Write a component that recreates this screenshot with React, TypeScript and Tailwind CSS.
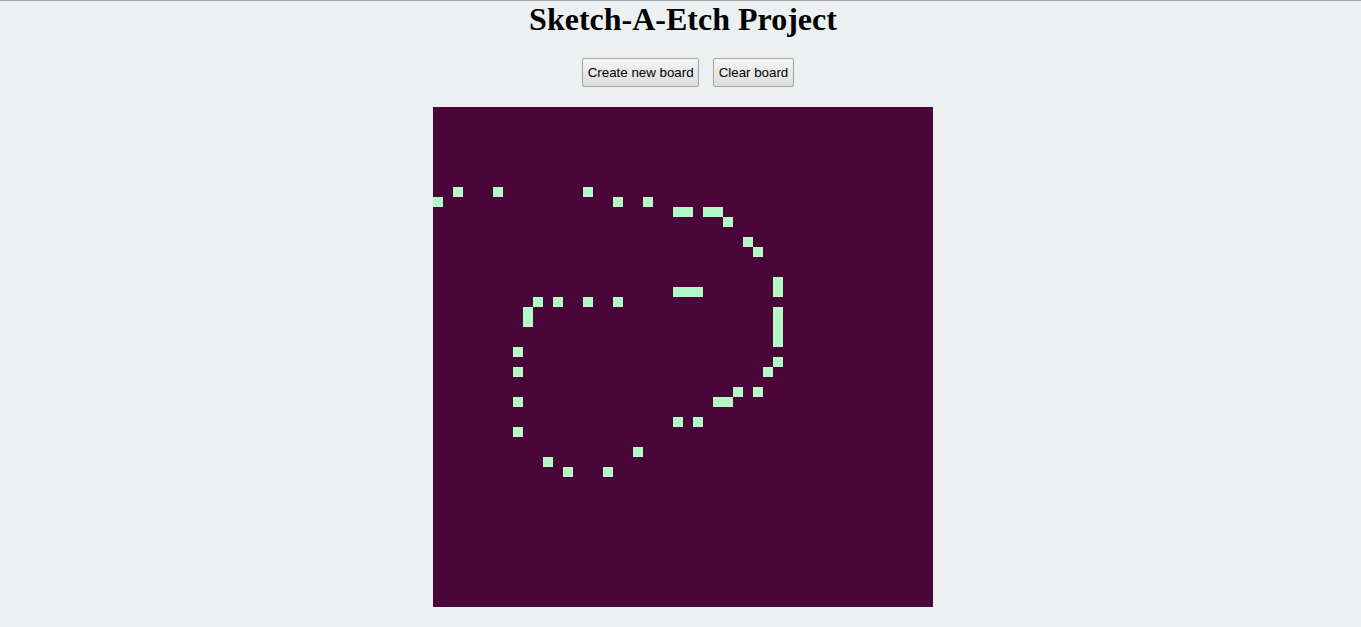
import { useState } from "react";

// rows -> painted columns on the 50x50 board
const SKETCH: Record<number, number[]> = {
  8: [2, 6, 15],
  9: [0, 18, 21],
  10: [24, 25, 27, 28],
  11: [29],
  13: [31],
  14: [32],
  17: [34],
  18: [24, 25, 26, 34],
  19: [10, 12, 15, 18],
  20: [9, 34],
  21: [9, 34],
  22: [34],
  23: [34],
  24: [8],
  25: [34],
  26: [8, 33],
  28: [30, 32],
  29: [8, 28, 29],
  31: [24, 26],
  32: [8],
  34: [20],
  35: [11],
  36: [13, 17],
};

const SIZE = 50;

const initial = () => {
  const cells: boolean[] = Array(SIZE * SIZE).fill(false);
  Object.entries(SKETCH).forEach(([r, cols]) => {
    cols.forEach((c) => { cells[Number(r) * SIZE + c] = true; });
  });
  return cells;
};

export default function App() {
  const [cells, setCells] = useState<boolean[]>(initial);

  const paint = (i: number) => {
    if (cells[i]) return;
    setCells((prev) => { const next = [...prev]; next[i] = true; return next; });
  };

  const btn =
    "h-[29px] px-[4.5px] border border-[#a3a3a3] rounded-[2px] bg-gradient-to-b from-[#f5f5f5] to-[#dddddd] text-[13.33px] text-black font-['Liberation_Sans',Arial,sans-serif] hover:from-[#eaf6fd] hover:to-[#bee6fd]";

  return (
    <div className="min-h-screen bg-[#ecf0f1] border-t border-[#a9a9a9] font-['Liberation_Serif','Times_New_Roman',serif]">
      <h1 className="pl-[5px] text-center text-[32px] font-bold leading-[36px] text-black">Sketch-A-Etch Project</h1>

      <div className="flex justify-center gap-[14px] pl-[15px] mt-[21px]">
        <button className={btn}>Create new board</button>
        <button className={btn} onClick={() => setCells(Array(SIZE * SIZE).fill(false))}>Clear board</button>
      </div>

      <div className="flex justify-center pl-[5px] mt-[20px]">
        <div className="grid grid-cols-[repeat(50,10px)] w-[500px] h-[500px] bg-[#4a0539]">
          {cells.map((on, i) => (
            <div key={i} onMouseEnter={() => paint(i)}
              className={on ? "w-[10px] h-[10px] bg-[#b4f8c8]" : "w-[10px] h-[10px]"} />
          ))}
        </div>
      </div>
    </div>
  );
}
